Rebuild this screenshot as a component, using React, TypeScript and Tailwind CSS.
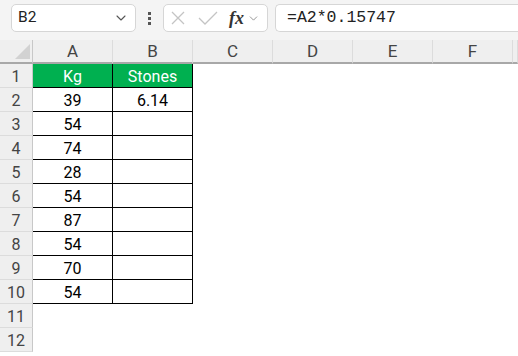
import { ChevronDown } from "lucide-react";

const cols = ["A", "B", "C", "D", "E", "F"];
const kg = [39, 54, 74, 28, 54, 87, 54, 70, 54];

function Toolbar() {
  return (
    <div className="flex h-[40px] items-start bg-[#f4f4f4] pt-[4px] pl-[11px]">
      <div className="flex h-[28px] w-[125px] items-center justify-between rounded-[5px] border border-[#d6d6d6] bg-white pl-[6px] pr-[6px]">
        <span className="text-[15.5px] text-[#222]">B2</span>
        <ChevronDown className="h-[16px] w-[16px] text-[#555]" strokeWidth={1.6} />
      </div>
      <div className="flex h-[28px] w-[27px] flex-col items-center justify-center gap-[2px]">
        <div className="h-[3px] w-[3px] bg-[#555]" />
        <div className="h-[3px] w-[3px] bg-[#555]" />
        <div className="h-[3px] w-[3px] bg-[#555]" />
      </div>
      <div className="flex h-[28px] w-[105px] items-center rounded-[5px] border border-[#d6d6d6] bg-white pl-[6px]">
        <svg width="16" height="16" viewBox="0 0 16 16" className="mr-[11px]">
          <path d="M2 2 L14 14 M14 2 L2 14" stroke="#c4c4c4" strokeWidth="1.3" fill="none" />
        </svg>
        <svg width="22" height="16" viewBox="0 0 22 16" className="mr-[10px]">
          <path d="M2 8 L8 14 L20 2" stroke="#c4c4c4" strokeWidth="1.3" fill="none" />
        </svg>
        <span className="mr-[3px] font-['Liberation_Serif',serif] text-[18px] font-bold italic leading-none text-[#333]">fx</span>
        <ChevronDown className="h-[13px] w-[13px] text-[#888]" strokeWidth={1.6} />
      </div>
      <div className="ml-[7px] flex h-[28px] flex-1 items-center rounded-l-[5px] border border-r-0 border-[#d6d6d6] bg-white pl-[11px]">
        <span className="font-['Liberation_Mono',monospace] text-[16.5px] text-[#222]">=A2*0.15747</span>
      </div>
    </div>
  );
}

export default function App() {
  return (
    <div className="h-[356px] w-[518px] overflow-hidden bg-white font-['Roboto',sans-serif]">
      <Toolbar />
      <div className="grid grid-cols-[33px_80px_80px_80px_80px_80px_80px_1fr] grid-rows-[24px_repeat(12,24px)]">
        {/* corner */}
        <div className="relative border-b-2 border-r border-b-[#a8a8a8] border-r-[#c8c8c8] bg-[#efefef]">
          <div className="absolute bottom-[3px] right-[2px] h-0 w-0 border-b-[15px] border-l-[15px] border-b-[#d2d2d2] border-l-transparent" />
        </div>
        {cols.concat("G").map((c) => (
          <div key={c} className="flex items-center justify-center border-b-2 border-r border-b-[#a8a8a8] border-r-[#dcdcdc] bg-[#efefef] pt-[2px] text-[17px] text-[#444]">
            {c === "G" ? "" : c}
          </div>
        ))}
        {Array.from({ length: 12 }).map((_, r) => {
          const row = r + 1;
          return [
            <div key={`h${row}`} className="flex items-center justify-center border-b border-r border-b-[#dcdcdc] border-r-[#c8c8c8] bg-[#efefef] pt-[2px] text-[16px] text-[#444]">
              {row}
            </div>,
            ...Array.from({ length: 7 }).map((__, c) => {
              const inTable = row <= 10 && c < 2;
              let content: string | number = "";
              let cls = "";
              if (row === 1 && c === 0) content = "Kg";
              if (row === 1 && c === 1) content = "Stones";
              if (row >= 2 && row <= 10 && c === 0) content = kg[row - 2];
              if (row === 2 && c === 1) content = "6.14";
              if (inTable) {
                cls = `border-b border-r border-black ${row === 1 ? "bg-[#00b050] text-white" : "text-black"}`;
              }
              return (
                <div key={`c${row}-${c}`} className={`flex items-center justify-center pt-[2px] text-[16px] ${cls}`}>
                  {content}
                </div>
              );
            }),
          ];
        })}
      </div>
    </div>
  );
}
